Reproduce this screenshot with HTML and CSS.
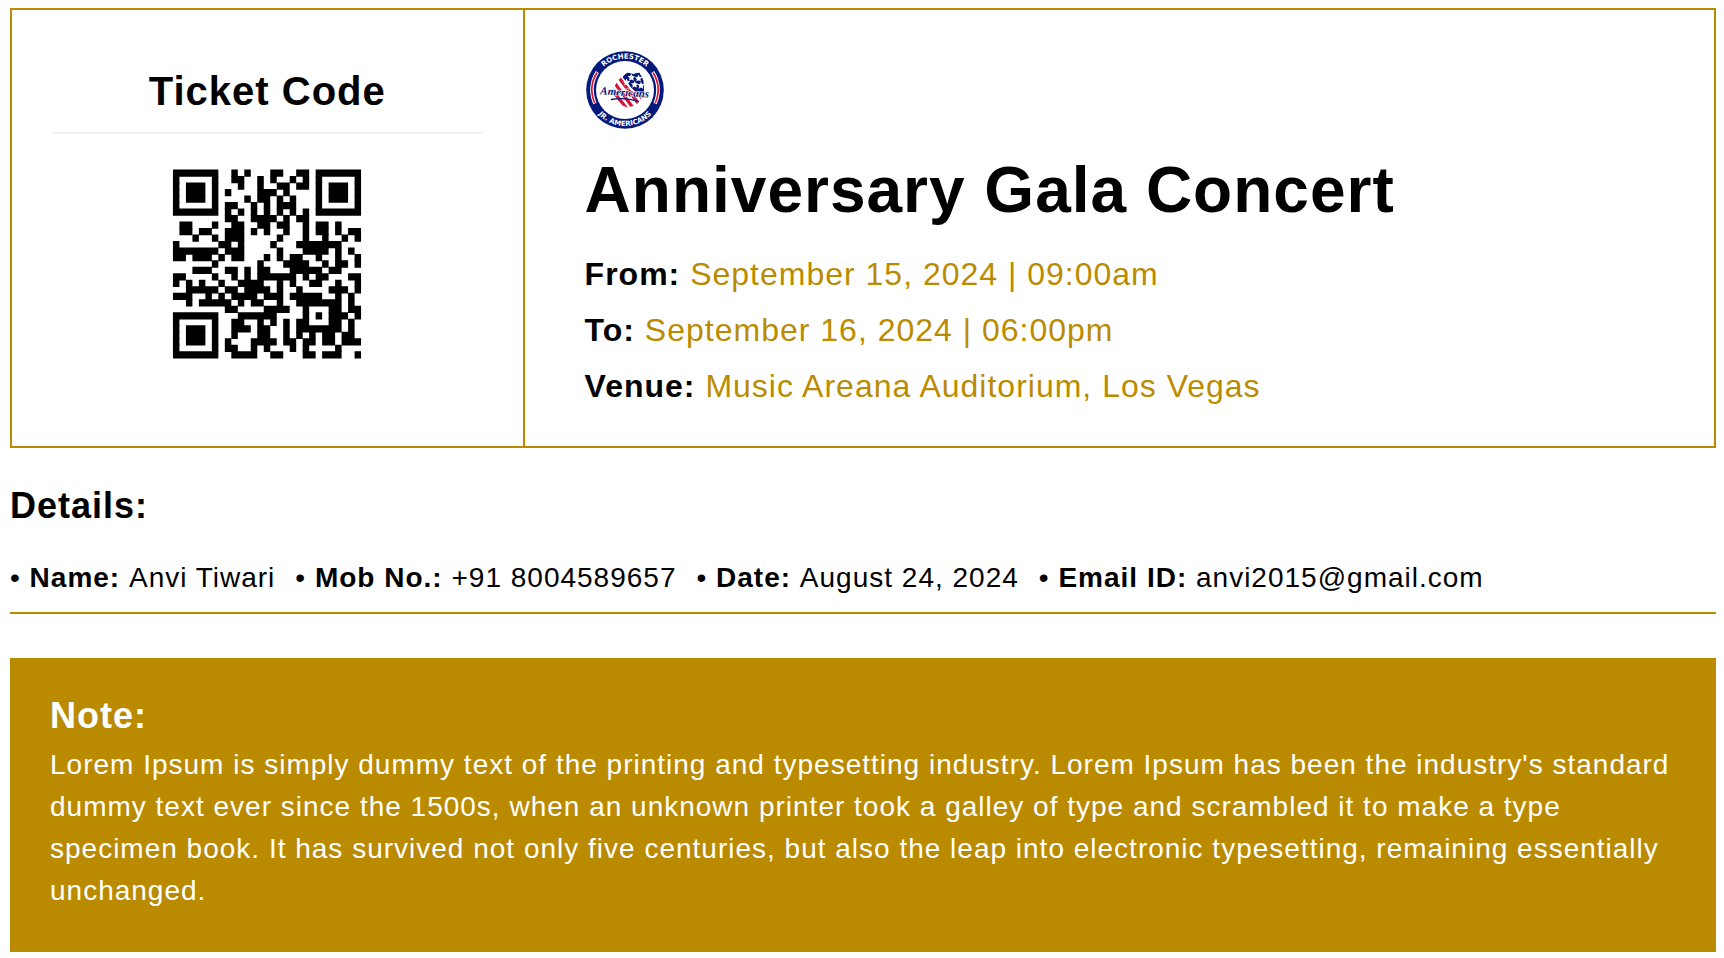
FILE: index.html
```html
<!DOCTYPE html>
<html lang="en">
<head>
<meta charset="utf-8">
<meta name="viewport" content="width=device-width, initial-scale=1">
<title>Anniversary Gala Concert</title>
<link rel="stylesheet" href="styles.css">
</head>
<body>
<main class="page">
  <section class="ticket">
    <div class="ticket-code">
      <h2 class="code-title">Ticket Code</h2>
      <svg class="qr" viewBox="-4 -4 37 37" role="img" aria-label="Ticket QR code">
        <g transform="translate(0 .5)" stroke="#000" stroke-width="1.12" fill="none">
          <path d="M0 0h7M9 0h1M11 0h1M15 0h2M19 0h2M22 0h7"/>
          <path d="M0 1h1M6 1h1M9 1h2M13 1h1M15 1h1M18 1h1M20 1h1M22 1h1M28 1h1"/>
          <path d="M0 2h1M2 2h3M6 2h1M10 2h1M13 2h1M16 2h2M19 2h2M22 2h1M24 2h3M28 2h1"/>
          <path d="M0 3h1M2 3h3M6 3h1M8 3h1M13 3h3M17 3h1M22 3h1M24 3h3M28 3h1"/>
          <path d="M0 4h1M2 4h3M6 4h1M11 4h1M13 4h2M16 4h1M18 4h1M22 4h1M24 4h3M28 4h1"/>
          <path d="M0 5h1M6 5h1M8 5h2M12 5h1M14 5h1M16 5h3M22 5h1M28 5h1"/>
          <path d="M0 6h7M8 6h1M10 6h1M12 6h1M14 6h1M16 6h1M18 6h1M20 6h1M22 6h7"/>
          <path d="M8 7h2M12 7h4M17 7h1M19 7h2"/>
          <path d="M1 8h2M6 8h1M9 8h2M13 8h2M16 8h2M20 8h1M22 8h2M25 8h1"/>
          <path d="M1 9h2M4 9h2M8 9h3M12 9h1M14 9h1M17 9h1M20 9h1M22 9h2M25 9h1M27 9h2"/>
          <path d="M3 10h1M6 10h1M8 10h3M16 10h1M20 10h1M23 10h1M26 10h1M28 10h1"/>
          <path d="M0 11h1M7 11h2M10 11h1M15 11h1M19 11h7"/>
          <path d="M0 12h7M8 12h3M16 12h1M20 12h4M25 12h1M27 12h1"/>
          <path d="M0 13h2M3 13h3M7 13h1M9 13h2M14 13h1M16 13h1M18 13h2M22 13h1M25 13h1M28 13h1"/>
          <path d="M6 14h1M13 14h1M17 14h4M23 14h1M25 14h2M28 14h1"/>
          <path d="M3 15h3M8 15h2M11 15h1M13 15h2M18 15h5M24 15h2"/>
          <path d="M0 16h2M6 16h1M9 16h1M11 16h1M13 16h6M20 16h1M22 16h2M27 16h2"/>
          <path d="M0 17h1M2 17h1M4 17h1M7 17h1M10 17h4M16 17h1M18 17h1M21 17h2M25 17h1M28 17h1"/>
          <path d="M2 18h5M8 18h2M11 18h4M16 18h1M19 18h1M24 18h3M28 18h1"/>
          <path d="M0 19h3M5 19h1M7 19h1M9 19h4M14 19h3M18 19h5M25 19h1M27 19h1"/>
          <path d="M2 20h1M4 20h5M10 20h1M12 20h2M16 20h1M19 20h7M27 20h1"/>
          <path d="M8 21h2M14 21h4M20 21h1M24 21h2M27 21h2"/>
          <path d="M0 22h7M10 22h6M20 22h1M22 22h1M24 22h3M28 22h1"/>
          <path d="M0 23h1M6 23h1M9 23h2M13 23h1M15 23h1M17 23h1M19 23h2M24 23h2M27 23h1"/>
          <path d="M0 24h1M2 24h3M6 24h1M9 24h3M13 24h2M17 24h1M19 24h7M27 24h1"/>
          <path d="M0 25h1M2 25h3M6 25h1M9 25h1M13 25h2M17 25h1M19 25h1M21 25h1M23 25h2M26 25h2"/>
          <path d="M0 26h1M2 26h3M6 26h1M8 26h1M12 26h4M17 26h2M20 26h2M23 26h2M26 26h3"/>
          <path d="M0 27h1M6 27h1M8 27h2M12 27h1M14 27h1M18 27h1M20 27h1M25 27h1"/>
          <path d="M0 28h7M9 28h4M15 28h2M20 28h2M23 28h3M28 28h1"/>
        </g>
      </svg>
    </div>
    <div class="ticket-event">
      <svg class="logo" viewBox="0 0 80 80" role="img" aria-label="Rochester Jr. Americans">
        <defs>
          <path id="arc-top" d="M8.500 40A31.500 31.500 0 0 1 71.500 40"/>
          <path id="arc-bottom" d="M4 40A36 36 0 0 0 76 40"/>
          <clipPath id="emblem"><path d="M35 27Q42 22 45 19L52 21L60 19L65 29L66 41Q62 58 52 61Q44 64 38 60L27 47Q27 35 35 27Z"/></clipPath>
        </defs>
        <circle cx="40" cy="40" r="38.800" fill="#05197a"/>
        <circle cx="40" cy="40" r="29" fill="#fff"/>
        <g fill="none">
          <path d="M12.300 22A33 33 0 0 0 9.900 53.500M67.700 22A33 33 0 0 1 70.100 53.500" stroke="#fff" stroke-width="3.600"/>
          <path d="M12 22.500A33 33 0 0 0 9.700 53M68 22.500A33 33 0 0 1 70.300 53" stroke="#d2173a" stroke-width="1.700"/>
        </g>
        <text class="logo-ring"><textPath href="#arc-top" startOffset="50%" text-anchor="middle">ROCHESTER</textPath></text>
        <text class="logo-ring"><textPath href="#arc-bottom" startOffset="50%" text-anchor="middle">JR. AMERICANS</textPath></text>
        <g transform="translate(6.400 7.300) scale(.8)">
          <g clip-path="url(#emblem)">
            <path d="M20 15h50v50H20z" fill="#fff"/>
            <path d="M20 33l28 36M26 28l31 42M32 22l36 48M40 20l34 46" stroke="#d2173a" stroke-width="4.200" fill="none"/>
            <path d="M39 25L45 17H68V45H58L50 38Z" fill="#05197a"/>
          </g>
          <g fill="#fff">
            <path id="star" d="M50 20.500l1.400 3 3.200.3-2.400 2.200.7 3.200-2.900-1.600-2.900 1.600.7-3.200-2.400-2.200 3.200-.3z"/>
            <use href="#star" x="9" y="1"/>
            <use href="#star" x="-6" y="6"/>
            <use href="#star" x="4" y="9"/>
            <use href="#star" x="12" y="10"/>
          </g>
        </g>
        <text class="logo-script" x="15" y="46" transform="rotate(4 40 46)">Americans</text>
        <path d="M26 49.500Q40 47 54 51.500" fill="none" stroke="#05197a" stroke-width="1.300"/>
      </svg>
      <h1 class="event-title">Anniversary Gala Concert</h1>
      <p class="event-line"><strong>From:</strong> <span class="event-value">September 15, 2024 | 09:00am</span></p>
      <p class="event-line"><strong>To:</strong> <span class="event-value">September 16, 2024 | 06:00pm</span></p>
      <p class="event-line"><strong>Venue:</strong> <span class="event-value">Music Areana Auditorium, Los Vegas</span></p>
    </div>
  </section>

  <section class="details">
    <h3 class="section-title">Details:</h3>
    <div class="details-row">
      <span>• <strong>Name: </strong>Anvi Tiwari</span>
      <span>• <strong>Mob No.: </strong>+91 8004589657</span>
      <span>• <strong>Date: </strong>August 24, 2024</span>
      <span>• <strong>Email ID: </strong>anvi2015@gmail.com</span>
    </div>
  </section>

  <section class="note">
    <h3 class="section-title">Note:</h3>
    <p class="note-text">Lorem Ipsum is simply dummy text of the printing and typesetting industry. Lorem Ipsum has been the industry's standard dummy text ever since the 1500s, when an unknown printer took a galley of type and scrambled it to make a type specimen book. It has survived not only five centuries, but also the leap into electronic typesetting, remaining essentially unchanged.</p>
  </section>
</main>
</body>
</html>
```
FILE: styles.css
```css
* {
  box-sizing: border-box;
}

body {
  margin: 0;
  background: #fff;
  color: #000;
  font-family: "Liberation Sans", Arial, sans-serif;
  font-size: 28px;
  line-height: 42px;
  letter-spacing: 1px;
}

h1, h2, h3, p {
  margin: 0;
}

.page {
  padding: 8px 8px 6px 10px;
}

.ticket {
  display: grid;
  grid-template-columns: 30% 1fr;
  border: 2px solid #ba8b00;
}

.ticket-code {
  display: flex;
  flex-direction: column;
  justify-content: center;
  padding: 40px;
}

.code-title {
  padding-bottom: 12px;
  border-bottom: 2px solid #f3f3f3;
  font-size: 40px;
  line-height: 58px;
  text-align: center;
}

.qr {
  width: 240px;
  height: 240px;
  margin: 10px auto;
}

.ticket-event {
  padding: 40px 60px 32px;
  border-left: 2px solid #ba8b00;
}

.logo {
  display: block;
  width: 80px;
  height: 80px;
  letter-spacing: 0;
}

.logo-ring {
  fill: #fff;
  font-family: "DejaVu Sans", sans-serif;
  font-size: 7px;
  font-weight: 700;
}

.logo-script {
  fill: #05197a;
  stroke: #fff;
  stroke-width: 1px;
  paint-order: stroke;
  font-family: "Liberation Serif", serif;
  font-size: 11px;
  font-style: italic;
  font-weight: 700;
}

.event-title {
  margin: 24px 0 20px;
  font-size: 64px;
  line-height: 72px;
}

.event-line {
  font-size: 32px;
  line-height: 56px;
}

.event-value {
  color: #ba8b00;
}

.section-title {
  font-size: 36px;
  line-height: 36px;
}

.details {
  margin-top: 40px;
  padding-bottom: 13px;
  border-bottom: 2px solid #ba8b00;
}

.details-row {
  display: flex;
  flex-wrap: wrap;
  column-gap: 20px;
  margin-top: 33px;
}

.note {
  margin-top: 44px;
  padding: 40px;
  background: #ba8b00;
  color: #fff;
}

.note-text {
  margin-top: 10px;
}
```
